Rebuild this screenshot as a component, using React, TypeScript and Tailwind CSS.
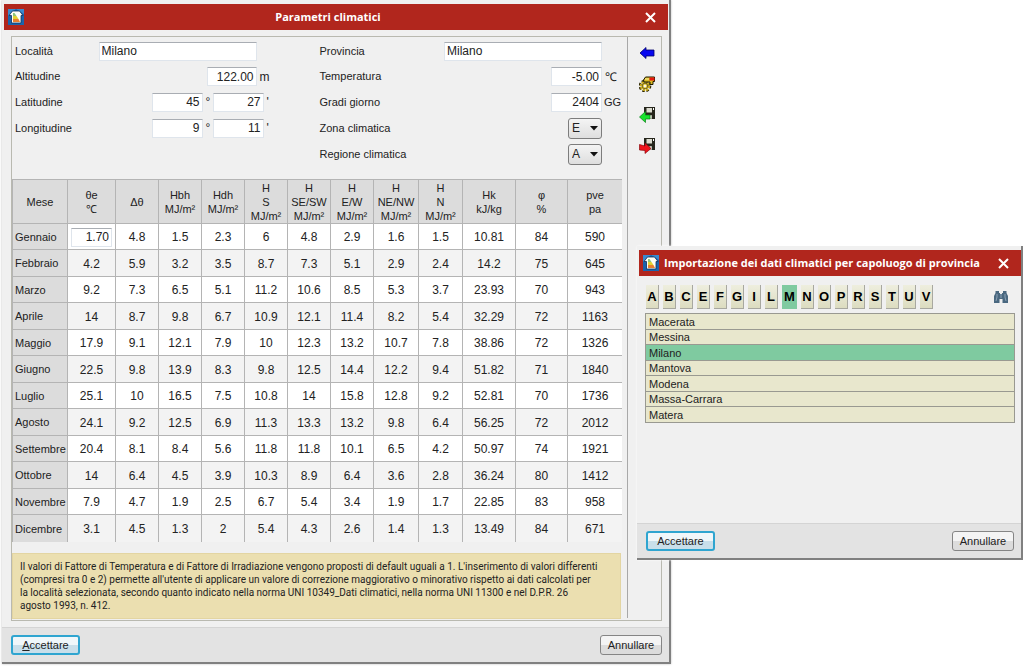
import { useState, type ReactNode } from "react";

const columns = [
  { label: ["Mese"], width: "w-[55px]" },
  { label: ["θe", "℃"], width: "w-[48px]" },
  { label: ["Δθ"], width: "w-[43px]" },
  { label: ["Hbh", "MJ/m²"], width: "w-[43px]" },
  { label: ["Hdh", "MJ/m²"], width: "w-[43px]" },
  { label: ["H", "S", "MJ/m²"], width: "w-[43px]" },
  { label: ["H", "SE/SW", "MJ/m²"], width: "w-[43px]" },
  { label: ["H", "E/W", "MJ/m²"], width: "w-[43px]" },
  { label: ["H", "NE/NW", "MJ/m²"], width: "w-[45px]" },
  { label: ["H", "N", "MJ/m²"], width: "w-[44px]" },
  { label: ["Hk", "kJ/kg"], width: "w-[53px]" },
  { label: ["φ", "%"], width: "w-[52px]" },
  { label: ["pve", "pa"], width: "w-[54px]" },
];

const months: [string, string[]][] = [
  ["Gennaio", ["1.70", "4.8", "1.5", "2.3", "6", "4.8", "2.9", "1.6", "1.5", "10.81", "84", "590"]],
  ["Febbraio", ["4.2", "5.9", "3.2", "3.5", "8.7", "7.3", "5.1", "2.9", "2.4", "14.2", "75", "645"]],
  ["Marzo", ["9.2", "7.3", "6.5", "5.1", "11.2", "10.6", "8.5", "5.3", "3.7", "23.93", "70", "943"]],
  ["Aprile", ["14", "8.7", "9.8", "6.7", "10.9", "12.1", "11.4", "8.2", "5.4", "32.29", "72", "1163"]],
  ["Maggio", ["17.9", "9.1", "12.1", "7.9", "10", "12.3", "13.2", "10.7", "7.8", "38.86", "72", "1326"]],
  ["Giugno", ["22.5", "9.8", "13.9", "8.3", "9.8", "12.5", "14.4", "12.2", "9.4", "51.82", "71", "1840"]],
  ["Luglio", ["25.1", "10", "16.5", "7.5", "10.8", "14", "15.8", "12.8", "9.2", "52.81", "70", "1736"]],
  ["Agosto", ["24.1", "9.2", "12.5", "6.9", "11.3", "13.3", "13.2", "9.8", "6.4", "56.25", "72", "2012"]],
  ["Settembre", ["20.4", "8.1", "8.4", "5.6", "11.8", "11.8", "10.1", "6.5", "4.2", "50.97", "74", "1921"]],
  ["Ottobre", ["14", "6.4", "4.5", "3.9", "10.3", "8.9", "6.4", "3.6", "2.8", "36.24", "80", "1412"]],
  ["Novembre", ["7.9", "4.7", "1.9", "2.5", "6.7", "5.4", "3.4", "1.9", "1.7", "22.85", "83", "958"]],
  ["Dicembre", ["3.1", "4.5", "1.3", "2", "5.4", "4.3", "2.6", "1.4", "1.3", "13.49", "84", "671"]],
];

const letters = "ABCEFGILMNOPRSTUV".split("");
const cities = ["Macerata", "Messina", "Milano", "Mantova", "Modena", "Massa-Carrara", "Matera"];

const inputBase =
  "h-[19px] min-w-0 border border-[#dfe5ec] border-t-[#a9adb3] bg-white px-[2px] text-xs leading-[16px] text-[#222] outline-none";

function AppIcon() {
  return (
    <svg width="16" height="16" viewBox="0 0 16 16" className="shrink-0" aria-hidden="true">
      <rect width="16" height="16" fill="#1a64ad" />
      <path d="M0 0h16v5L8 0 0 7z" fill="#3a8ace" />
      <path d="M1 6.500 4.500 2h7L15 6.500h-2V14H3.500V6.500z" fill="#fdfdf6" stroke="#10305a" strokeWidth=".8" />
      <path d="M5 4h1.500l2 3H5z" fill="#8cc479" />
      <path d="M5 7h3.500l2 3H5z" fill="#e2d233" />
      <path d="M5 10h5.500l1.500 3H5z" fill="#e8802f" />
    </svg>
  );
}

function BackIcon() {
  return (
    <svg width="16" height="16" viewBox="0 0 16 16" aria-hidden="true">
      <path d="M1 8 7 2.500V5h8v6H7v2.500z" fill="#0808f0" stroke="#00006a" strokeWidth=".8" />
    </svg>
  );
}

function ToolIcon() {
  return (
    <svg width="16" height="16" viewBox="0 0 16 16" aria-hidden="true">
      <circle cx="6" cy="10" r="4.300" fill="none" stroke="#2b2500" strokeWidth="4" strokeDasharray="2 1.400" />
      <circle cx="6" cy="10" r="4" fill="none" stroke="#c9ab1c" strokeWidth="2.500" strokeDasharray="2.200 .8" />
      <circle cx="6" cy="10" r="2.700" fill="#e8d04a" stroke="#4a3d00" strokeWidth=".6" />
      <circle cx="6" cy="10" r="1.200" fill="#f6f6f0" />
      <path d="M4.500 4 6.500 1h9v4.500H14v3h-3V6H5z" fill="#d8ba22" stroke="#1d1900" strokeWidth="1" />
      <path d="M6 2.500h4v1H6z" fill="#fff3a0" />
      <path d="M10.500 1.500h5v3h-5z" fill="#e8170f" />
    </svg>
  );
}

function DiskIcon({ direction }: { direction: "in" | "out" }) {
  return (
    <svg width="16" height="16" viewBox="0 0 16 16" aria-hidden="true">
      <path d="M5 0h11v12H6l-1-1z" fill="#26261c" />
      <path d="M7.500 1h5.500v4.500H7.500z" fill="#dcdcd0" />
      <path d="M14 1h1v2h-1z" fill="#fff" />
      <path d="M8 8h5v4H8z" fill="#8d8d7c" />
      <path d="M11 8.500h1.500v3H11z" fill="#f2f2ea" />
      {direction === "in" ? (
        <path d="M.5 10 6.500 4.500V8H11v4H6.500v3.500z" fill="#16e32c" stroke="#0a7d17" strokeWidth=".7" />
      ) : (
        <path d="M12 10.500 6 5v3L.5 6.500V12l5.500.5v3z" fill="#f0141c" stroke="#8d0a0e" strokeWidth=".7" />
      )}
    </svg>
  );
}

function BinocularsIcon() {
  return (
    <svg width="16" height="14" viewBox="0 0 16 14" aria-hidden="true">
      <path
        d="M2.500 1H6v2h1v1h2V3h1V1h3.500v2L15 6v7H9.500V9h-3v4H1V6l1.500-3z"
        fill="#4a6880"
      />
      <path d="M4 4v3L3 11M12 4v3l1 4M8 4v4" stroke="#a9bdce" strokeWidth=".7" fill="none" />
    </svg>
  );
}

function TitleBar({ title, centered }: { title: string; centered?: boolean }) {
  return (
    <header className="flex h-[26px] items-center bg-[#b1261d] pr-3 pl-1 text-white">
      <AppIcon />
      <h2
        className={`flex-1 font-['Open_Sans','Liberation_Sans',sans-serif] text-[11px] font-bold whitespace-nowrap ${
          centered ? "pr-3 text-center" : "pl-[5px]"
        }`}
      >
        {title}
      </h2>
      <button type="button" aria-label="Chiudi" className="flex size-3 items-center justify-center">
        <svg width="11" height="11" viewBox="0 0 11 11" aria-hidden="true">
          <path d="M1 1l9 9M10 1l-9 9" stroke="#fff" strokeWidth="2" />
        </svg>
      </button>
    </header>
  );
}

function DialogButton({ primary, children }: { primary?: boolean; children: ReactNode }) {
  return (
    <button
      type="button"
      className={`h-5 rounded-[3px] bg-linear-to-b text-[11px] leading-none text-[#222] ${
        primary
          ? "w-[69px] border-2 border-[#2fa5d0] from-[#f0f7fa] from-50% to-[#c9dfea] to-50%"
          : "w-[62px] border border-[#858585] from-[#f4f4f4] from-50% to-[#dcdcdc] to-50%"
      }`}
    >
      {children}
    </button>
  );
}

function ZoneSelect({ id, options }: { id: string; options: string[] }) {
  return (
    <span className="relative flex">
      <select
        id={id}
        defaultValue={options[0]}
        className="h-[21px] w-[34px] appearance-none rounded-[3px] border border-[#7d7d7d] bg-linear-to-b from-[#f4f4f4] to-[#dedede] pl-[3px] text-xs leading-[18px] text-[#222]"
      >
        {options.map((o) => (
          <option key={o}>{o}</option>
        ))}
      </select>
      <svg
        width="8"
        height="5"
        viewBox="0 0 8 5"
        className="pointer-events-none absolute top-2 right-1"
        aria-hidden="true"
      >
        <path d="M0 0h8L4 4.500z" fill="#111" />
      </svg>
    </span>
  );
}

function Row({ label, id, children }: { label: string; id: string; children: ReactNode }) {
  return (
    <div className="flex items-center">
      <label htmlFor={id} className="flex-1 text-[11px]">
        {label}
      </label>
      {children}
    </div>
  );
}

function ClimateForm() {
  const rows = "grid grid-rows-[26px_25px_26px_26px_26px]";
  return (
    <form className="grid grid-cols-2 gap-[3px] pt-px pl-[3px]">
      <div className={rows}>
        <Row label="Località" id="localita">
          <input id="localita" defaultValue="Milano" className={`${inputBase} mr-[60px] w-[158px]`} />
        </Row>
        <Row label="Altitudine" id="altitudine">
          <input id="altitudine" defaultValue="122.00" className={`${inputBase} w-[50px] text-right`} />
          <span className="w-[60px] pl-[3px] text-xs">m</span>
        </Row>
        <Row label="Latitudine" id="lat">
          <input id="lat" defaultValue="45" className={`${inputBase} w-[51px] border-[#8fbfe3] text-right`} />
          <span className="w-[10px] pl-[3px] text-xs">°</span>
          <input aria-label="Latitudine, primi" defaultValue="27" className={`${inputBase} w-[51px] text-right`} />
          <span className="w-[53px] pl-[3px] text-xs">'</span>
        </Row>
        <Row label="Longitudine" id="lon">
          <input id="lon" defaultValue="9" className={`${inputBase} w-[51px] text-right`} />
          <span className="w-[10px] pl-[3px] text-xs">°</span>
          <input aria-label="Longitudine, primi" defaultValue="11" className={`${inputBase} w-[51px] text-right`} />
          <span className="w-[53px] pl-[3px] text-xs">'</span>
        </Row>
      </div>
      <div className={rows}>
        <Row label="Provincia" id="provincia">
          <input id="provincia" defaultValue="Milano" className={`${inputBase} mr-[19px] w-[158px]`} />
        </Row>
        <Row label="Temperatura" id="temperatura">
          <input id="temperatura" defaultValue="-5.00" className={`${inputBase} w-[51px] text-right`} />
          <span className="w-[19px] pl-[3px] text-xs">℃</span>
        </Row>
        <Row label="Gradi giorno" id="gradi">
          <input id="gradi" defaultValue="2404" className={`${inputBase} w-[51px] text-right`} />
          <span className="w-[19px] pl-[2px] text-[11px]">GG</span>
        </Row>
        <Row label="Zona climatica" id="zona">
          <ZoneSelect id="zona" options={["E", "A", "B", "C", "D", "F"]} />
          <span className="w-[19px]" />
        </Row>
        <Row label="Regione climatica" id="regione">
          <ZoneSelect id="regione" options={["A", "B", "C", "D"]} />
          <span className="w-[19px]" />
        </Row>
      </div>
    </form>
  );
}

function ClimateTable() {
  return (
    <table className="mt-3 w-full table-fixed border-separate border-spacing-0 border-t border-l border-[#b4b4b4] text-center text-xs">
      <colgroup>
        {columns.map((c, i) => (
          <col key={i} className={c.width} />
        ))}
      </colgroup>
      <thead>
        <tr className="h-11 bg-[#dcdcdc]">
          {columns.map((c, i) => (
            <th
              key={i}
              scope="col"
              className="border-r border-b border-[#b4b4b4] p-0 text-[11px] leading-[14px] font-normal last:border-r-0"
            >
              {c.label.map((line) => (
                <span key={line} className="block whitespace-nowrap">
                  {line}
                </span>
              ))}
            </th>
          ))}
        </tr>
      </thead>
      <tbody>
        {months.map(([month, values], r) => (
          <tr key={month} className="group odd:h-[26px] odd:bg-white even:h-[27px] even:bg-[#f3f3f3]">
            <th
              scope="row"
              className="border-r border-b border-[#b4b4b4] bg-[#dcdcdc] p-0 pt-px pl-[2px] text-left text-[11px] font-normal group-last:border-b-0"
            >
              {month}
            </th>
            {values.map((v, c) => (
              <td
                key={c}
                className="border-r border-b border-[#b4b4b4] p-0 pt-px leading-4 group-last:border-b-0 last:border-r-0"
              >
                {r === 0 && c === 0 ? (
                  <input
                    aria-label="θe Gennaio"
                    defaultValue={v}
                    className={`${inputBase} mx-auto block w-[41px] text-right`}
                  />
                ) : (
                  v
                )}
              </td>
            ))}
          </tr>
        ))}
      </tbody>
    </table>
  );
}

function ClimateWindow() {
  return (
    <section className="mr-[353px] ml-[2px] border-r-2 border-b-2 border-[#808080] bg-[#f0f0f0] shadow-[0_0_2px_#bbb]">
      <div className="pt-1 pr-px pl-[2px]">
        <TitleBar title="Parametri climatici" centered />
      </div>
      <div className="mt-[6px] mr-[7px] ml-[9px] flex border border-[#b9b9b0]">
        <div className="min-w-0 flex-1 pr-[6px] pb-px">
          <ClimateForm />
          <div className="pr-px">
            <ClimateTable />
          </div>
          <p className="mt-[11px] h-[66px] border border-[#e3d5a2] bg-[#ebdfb0] px-[7px] pt-[6px] font-[Roboto,sans-serif] text-[10px] leading-[13px] whitespace-nowrap">
            Il valori di Fattore di Temperatura e di Fattore di Irradiazione vengono proposti di default uguali a 1.
            L'inserimento di valori differenti
            <br />
            (compresi tra 0 e 2) permette all'utente di applicare un valore di correzione maggiorativo o minorativo
            rispetto ai dati calcolati per
            <br />
            la località selezionata, secondo quanto indicato nella norma UNI 10349_Dati climatici, nella norma UNI 11300
            e nel D.P.R. 26
            <br />
            agosto 1993, n. 412.
          </p>
        </div>
        <aside className="mb-[2px] flex w-[34px] flex-col items-center gap-[15px] border-l border-[#a8a8a8] pt-2 pl-[5px]">
          <button type="button" aria-label="Indietro">
            <BackIcon />
          </button>
          <button type="button" aria-label="Strumenti">
            <ToolIcon />
          </button>
          <button type="button" aria-label="Importa">
            <DiskIcon direction="in" />
          </button>
          <button type="button" aria-label="Esporta">
            <DiskIcon direction="out" />
          </button>
        </aside>
      </div>
      <footer className="mt-[6px] flex h-[35px] items-center justify-between border-t border-[#d4d4d4] bg-[#e3e3e3] pr-[7px] pl-[9px]">
        <DialogButton primary>
          <u>A</u>ccettare
        </DialogButton>
        <DialogButton>Annullare</DialogButton>
      </footer>
    </section>
  );
}

function ImportWindow() {
  const [letter, setLetter] = useState("M");
  const [city, setCity] = useState("Milano");

  return (
    <section className="absolute top-[246px] right-px flex h-[314px] w-[386px] flex-col border-r-2 border-b-2 border-[#808080] bg-[#f0f0f0] shadow-[0_0_2px_#fff]">
      <div className="pt-1 pl-[2px]">
        <TitleBar title="Importazione dei dati climatici per capoluogo di provincia" />
      </div>
      <div className="flex-1 pr-[6px] pl-2">
        <div className="mt-[9px] flex items-center justify-between pr-[6px]">
          <div className="flex gap-1 pl-px">
            {letters.map((l) => (
              <button
                key={l}
                type="button"
                onClick={() => setLetter(l)}
                className={`flex h-6 items-center justify-center text-[13px] font-bold text-black ${
                  l === letter
                    ? "w-[15px] bg-[#7fcaa0]"
                    : "w-[13px] border-r border-b border-[#a8a8a0] bg-linear-to-b from-[#eeeede] to-[#dcdcc0]"
                }`}
              >
                {l}
              </button>
            ))}
          </div>
          <button type="button" aria-label="Cerca">
            <BinocularsIcon />
          </button>
        </div>
        <ul className="mt-1 border border-b-0 border-[#999991] text-[11px]">
          {cities.map((c) => (
            <li key={c} className="border-b border-[#999991] odd:h-4 even:h-[15px]">
              <button
                type="button"
                onClick={() => setCity(c)}
                className={`block h-full w-full pl-[3px] text-left leading-[14px] ${
                  c === city ? "bg-[#7fcaa0]" : "bg-[#e8e7cd]"
                }`}
              >
                {c}
              </button>
            </li>
          ))}
        </ul>
      </div>
      <footer className="flex h-[35px] items-center justify-between border-t border-[#d4d4d4] bg-[#e3e3e3] pr-[7px] pl-[9px]">
        <DialogButton primary>Accettare</DialogButton>
        <DialogButton>Annullare</DialogButton>
      </footer>
    </section>
  );
}

export default function App() {
  return (
    <main className="relative min-h-screen bg-white font-['Liberation_Sans',Arial,sans-serif] text-[#222]">
      <ClimateWindow />
      <ImportWindow />
    </main>
  );
}
